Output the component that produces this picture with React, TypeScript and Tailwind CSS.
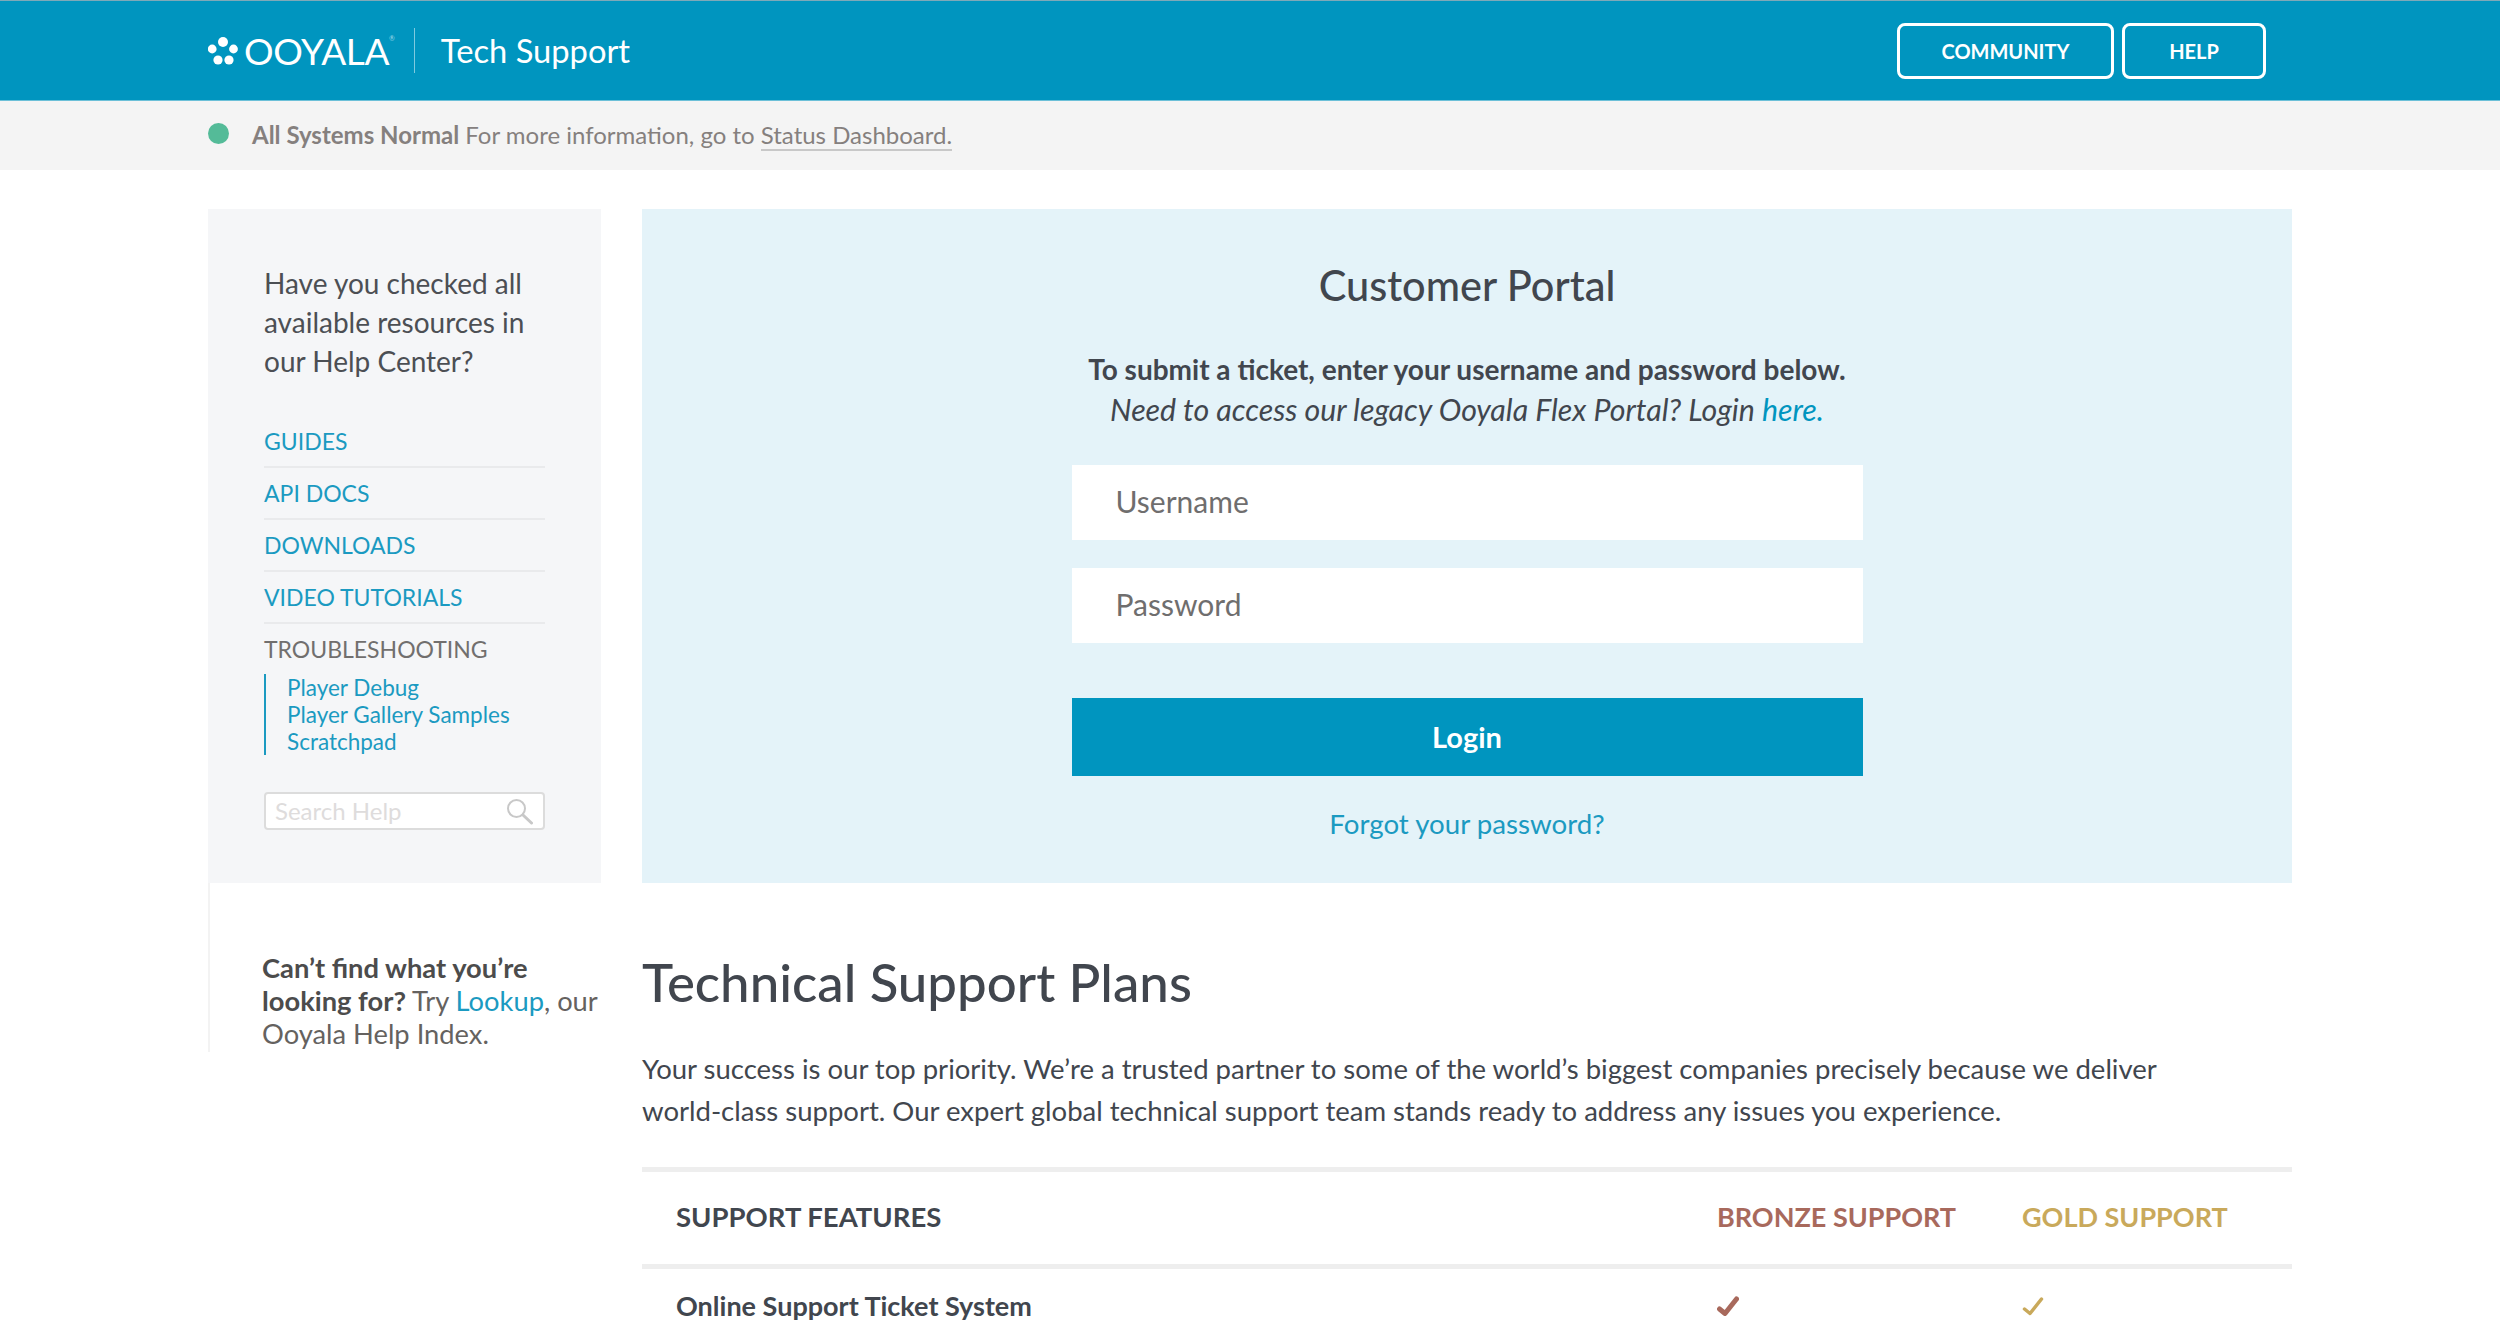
const navLinks = ["GUIDES", "API DOCS", "DOWNLOADS", "VIDEO TUTORIALS"];
const subLinks = ["Player Debug", "Player Gallery Samples", "Scratchpad"];

function Logo() {
  return (
    <div className="flex items-center">
      <svg width="30" height="30" viewBox="0 0 30 30" className="mr-[6px] fill-white">
        <circle cx="4.2" cy="14" r="4.4" />
        <circle cx="15" cy="7" r="5" />
        <circle cx="25.5" cy="14" r="4.4" />
        <circle cx="10" cy="25" r="4.6" />
        <circle cx="21" cy="25" r="4.6" />
      </svg>
      <span className="text-[37px] leading-none tracking-[-0.4px] text-white">OOYALA</span>
      <span className="mb-[24px] text-[7px] leading-none text-[#9fd8e8]">®</span>
    </div>
  );
}

function Header() {
  return (
    <header className="flex h-[100px] items-center justify-between border-t border-[#7fa9b8] bg-[#0095bf] pl-[208px] pr-[234px]">
      <div className="flex items-center">
        <Logo />
        <div className="ml-[19px] mr-[26px] h-[45px] w-px bg-[#7fcadf]" />
        <span className="text-[32.7px] text-white">Tech Support</span>
      </div>
      <div className="flex gap-[8px]">
        <a className="flex h-[56px] w-[217px] items-center justify-center rounded-[8px] border-[3px] border-white text-[20px] font-bold text-white">
          COMMUNITY
        </a>
        <a className="flex h-[56px] w-[144px] items-center justify-center rounded-[8px] border-[3px] border-white text-[20px] font-bold text-white">
          HELP
        </a>
      </div>
    </header>
  );
}

function StatusBar() {
  return (
    <div className="flex h-[70px] items-center border-t border-[#6cc0d8] bg-[#f4f4f4] pl-[208px] text-[24px] text-[#85807e]">
      <span className="mb-[4px] mr-[23px] h-[21px] w-[21px] rounded-full bg-[#54bb98]" />
      <p className="mb-[2px]">
        <b className="font-bold">All Systems Normal</b> For more information, go to{" "}
        <a className="border-b-2 border-[#c8c8c8]">Status Dashboard.</a>
      </p>
    </div>
  );
}

function Sidebar() {
  return (
    <aside className="w-[393px] shrink-0">
      <div className="h-[674px] bg-[#f5f6f8] px-[56px] pt-[55px]">
        <p className="text-[28px] leading-[39px] text-[#4c4f54]">
          Have you checked all available resources in our Help Center?
        </p>
        <ul className="mt-[35px] w-[281px]">
          {navLinks.map((link) => (
            <li
              key={link}
              className="flex h-[52px] items-center border-b-2 border-[#e9eaec] text-[23px] text-[#1b9ac1]"
            >
              {link}
            </li>
          ))}
          <li className="flex h-[50px] items-center text-[23px] text-[#716f6e]">TROUBLESHOOTING</li>
        </ul>
        <ul className="w-[281px] border-l-2 border-[#1b9ac1] pl-[21px] text-[22.5px] leading-[27px] text-[#1b9ac1]">
          {subLinks.map((link) => (
            <li key={link}>{link}</li>
          ))}
        </ul>
        <div className="mt-[37px] flex h-[38px] w-[281px] items-center justify-between rounded-[4px] border-2 border-[#dcdcdc] bg-white pl-[9px] pr-[10px]">
          <span className="text-[24px] text-[#dedcdc]">Search Help</span>
          <svg width="27" height="27" viewBox="0 0 27 27" fill="none" stroke="#c8c8c8" strokeWidth="2">
            <circle cx="10.5" cy="10.5" r="8.5" />
            <path d="M17 17l8.5 8" strokeWidth="3" strokeLinecap="round" />
          </svg>
        </div>
      </div>
      <div className="h-[169px] border-l-2 border-[#f3f3f3] pl-[52px] pt-[68px]">
        <p className="w-[345px] text-[27.3px] leading-[33px] text-[#65625f]">
          <b className="font-bold text-[#4c4c4c]">Can’t find what you’re looking for?</b> Try{" "}
          <a className="text-[#1b9ac1]">Lookup</a>, our Ooyala Help Index.
        </p>
      </div>
    </aside>
  );
}

function PortalCard() {
  return (
    <section className="flex h-[674px] flex-col items-center bg-[#e4f3f9] pt-[51px] text-[#41464e]">
      <h2 className="text-[41.5px] font-medium leading-[50px]">Customer Portal</h2>
      <p className="mt-[39px] text-[28px] font-bold leading-[40px]">
        To submit a ticket, enter your username and password below.
      </p>
      <p className="text-[30.3px] italic leading-[40px]">
        Need to access our legacy Ooyala Flex Portal? Login <a className="text-[#0095bf]">here.</a>
      </p>
      <div className="mt-[36px] flex h-[75px] w-[791px] items-center bg-white pb-[2px] pl-[44px] text-[30px] text-[#6f6e6e]">
        Username
      </div>
      <div className="mt-[28px] flex h-[75px] w-[791px] items-center bg-white pb-[2px] pl-[44px] text-[30px] text-[#6f6e6e]">
        Password
      </div>
      <button className="mt-[55px] h-[78px] w-[791px] bg-[#0095bf] text-[29px] font-bold text-white">
        Login
      </button>
      <a className="mt-[28px] text-[27.7px] leading-[40px] text-[#1b9ac1]">Forgot your password?</a>
    </section>
  );
}

function Check({ color, thick }: { color: string; thick: number }) {
  return (
    <svg width="22" height="20" viewBox="0 0 22 20" fill="none" stroke={color} strokeWidth={thick} strokeLinecap="round" strokeLinejoin="round">
      <path d="M2.5 13l5.5 4.5L19.5 3" />
    </svg>
  );
}

function Plans() {
  return (
    <section className="text-[#41464e]">
      <h1 className="mt-[67px] text-[52.8px] font-medium leading-[64px]">Technical Support Plans</h1>
      <p className="mt-[34px] text-[27.5px] leading-[42px]">
        Your success is our top priority. We’re a trusted partner to some of the world’s biggest
        companies precisely because we deliver
        <br />
        world-class support. Our expert global technical support team stands ready to address any
        issues you experience.
      </p>
      <div className="mt-[35px] flex h-[102px] items-center border-y-[5px] border-[#eeeeee] pb-[2px] pl-[34px] text-[27px] font-bold">
        <span className="w-[1041px] text-[27.5px]">SUPPORT FEATURES</span>
        <span className="w-[305px] text-[#a8695c]">BRONZE SUPPORT</span>
        <span className="text-[#c9a95b]">GOLD SUPPORT</span>
      </div>
      <div className="flex h-[76px] items-center pb-[2px] pl-[34px] text-[27px] font-bold">
        <span className="w-[1041px]">Online Support Ticket System</span>
        <span className="w-[305px]">
          <Check color="#a8695c" thick={5} />
        </span>
        <span>
          <Check color="#c9a95b" thick={3.5} />
        </span>
      </div>
    </section>
  );
}

export default function App() {
  return (
    <div className="h-[1329px] overflow-hidden bg-white font-['Lato','Liberation_Sans',sans-serif]">
      <Header />
      <StatusBar />
      <main className="flex gap-[41px] px-[208px] pt-[39px]">
        <Sidebar />
        <div className="w-[1650px] shrink-0">
          <PortalCard />
          <Plans />
        </div>
      </main>
    </div>
  );
}
